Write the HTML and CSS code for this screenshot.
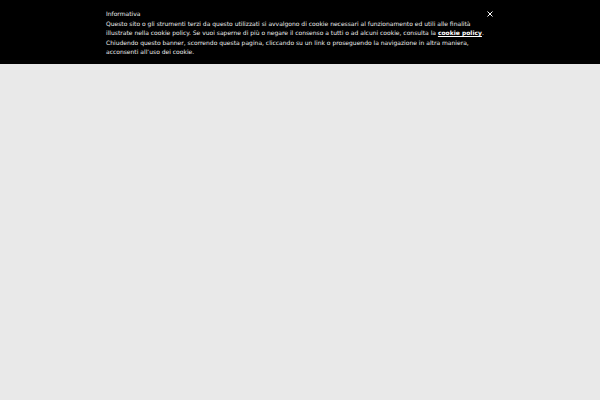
FILE: index.html
```html
<!DOCTYPE html>
<html lang="it">
<head>
<meta charset="utf-8">
<link rel="stylesheet" href="styles.css">
</head>
<body>
<div class="banner">
  <div class="inner">
    <div class="text">
      <div class="title">Informativa</div>
      <p class="msg">Questo sito o gli strumenti terzi da questo utilizzati si avvalgono di cookie necessari al funzionamento ed utili alle finalità illustrate nella cookie policy. Se vuoi saperne di più o negare il consenso a tutti o ad alcuni cookie, consulta la <a href="#">cookie policy</a>.<br>Chiudendo questo banner, scorrendo questa pagina, cliccando su un link o proseguendo la navigazione in altra maniera, acconsenti all’uso dei cookie.</p>
    </div>
    <button class="close" aria-label="Chiudi">
      <svg width="6" height="6" viewBox="0 0 6 6"><path d="M0.5 0.5L5.5 5.5M5.5 0.5L0.5 5.5" stroke="#fff" stroke-width="1"/></svg>
    </button>
  </div>
</div>
</body>
</html>
```
FILE: styles.css
```css
html, body { margin: 0; padding: 0; }
body { background: #e9e9e9; font-family: "DejaVu Sans", sans-serif; width: 600px; height: 400px; }
.banner { background: #000; color: #ececec; height: 64px; box-sizing: border-box; padding-top: 9px; }
.inner { width: 388px; margin: 0 auto; display: flex; justify-content: space-between; align-items: flex-start; }
.text { width: 380px; flex: none; }
.title { font-size: 6px; line-height: 9px; margin-bottom: 1px; }
.msg { margin: 0; font-size: 6px; line-height: 9.4px; }
.msg a { color: #fff; font-weight: bold; text-decoration: underline; }
.close { background: none; border: 0; padding: 0; margin: 2px 1px 0 0; width: 6px; height: 6px; display: flex; cursor: pointer; }
.close svg { display: block; }
```
